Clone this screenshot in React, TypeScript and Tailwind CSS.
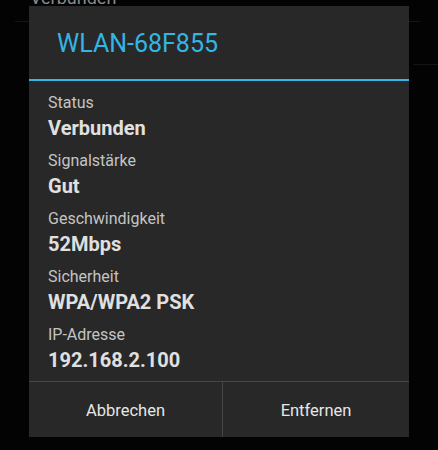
import React from "react";

const items = [
  { label: "Status", value: "Verbunden" },
  { label: "Signalstärke", value: "Gut" },
  { label: "Geschwindigkeit", value: "52Mbps" },
  { label: "Sicherheit", value: "WPA/WPA2 PSK" },
  { label: "IP-Adresse", value: "192.168.2.100" },
];

export default function App() {
  return (
    <div
      className="relative h-[450px] w-[438px] overflow-hidden bg-[#030303]"
      style={{ fontFamily: "Roboto, 'Noto Sans', sans-serif" }}
    >
      {/* background list */}
      <div className="flex flex-col">
        <div className="-mt-[14px] h-[35px] pl-[30px] text-[18px] leading-[24px] text-[#8a8a8a]">
          Verbunden
        </div>
        <div className="ml-[15px] mr-[18px] h-px bg-[#161616]" />
        <div className="mt-[42px] ml-[413px] h-px bg-[#141414]" />
      </div>

      {/* dialog */}
      <div className="absolute left-[29px] top-[6px] flex w-[380px] flex-col bg-[#282828]">
        <div className="flex h-[73px] items-center pl-[28px] pt-[2px] text-[25px] leading-[32px] text-[#33b5e5]">
          WLAN-68F855
        </div>
        <div className="h-[2px] bg-[#33b5e5]" />
        <div className="flex h-[300px] flex-col gap-[10px] pl-[19px] pt-[12px]">
          {items.map((it) => (
            <div key={it.label} className="flex flex-col">
              <div className="text-[16px] leading-[20px] text-[#c4c4c4]">{it.label}</div>
              <div className="mt-[2px] text-[20px] font-bold leading-[26px] text-[#e0e0e0]">
                {it.value}
              </div>
            </div>
          ))}
        </div>
        <div className="h-px bg-[#454545]" />
        <div className="grid h-[55px] grid-cols-[194px_1fr]">
          <div className="flex items-center justify-center border-r border-[#454545] pt-[4px] text-[16.5px] text-[#e6e6e6]">
            Abbrechen
          </div>
          <div className="flex items-center justify-center pt-[4px] text-[16.5px] text-[#e6e6e6]">
            Entfernen
          </div>
        </div>
      </div>
    </div>
  );
}
